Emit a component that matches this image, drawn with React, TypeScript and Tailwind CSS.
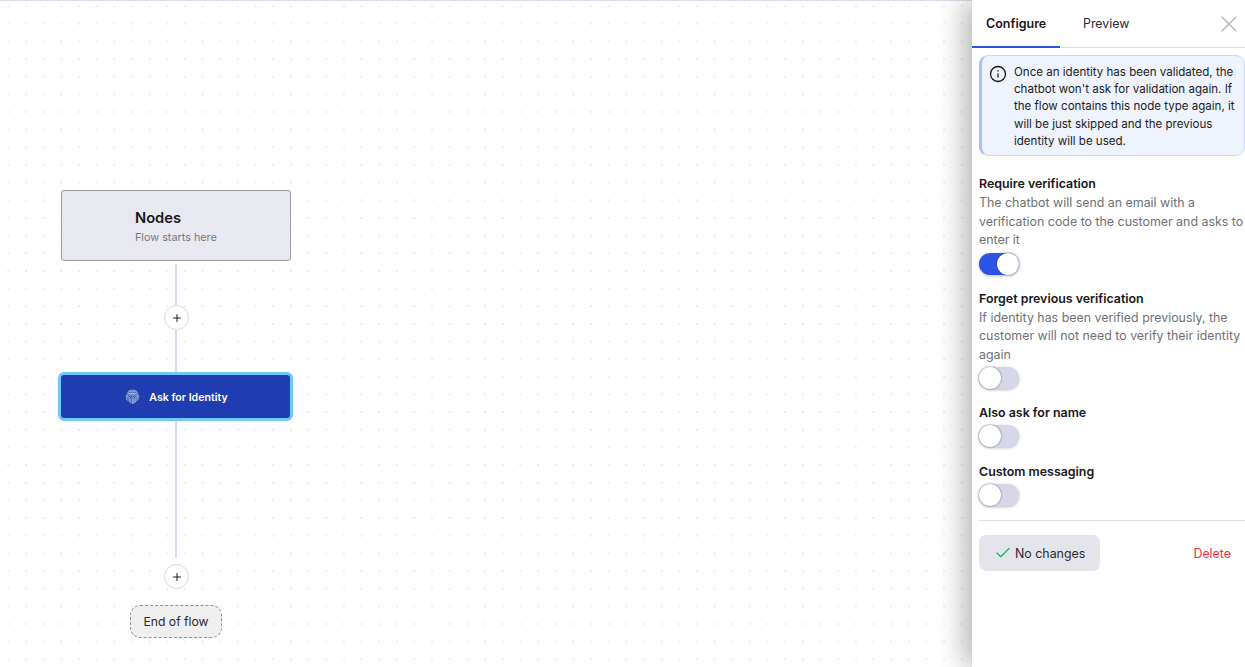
import React from "react";
import { Check, Info, Plus, X } from "lucide-react";

function Toggle({ on = false }: { on?: boolean }) {
  return (
    <div className={`relative h-[22px] w-[40px] rounded-full shadow-[0_1px_3px_rgba(60,60,90,0.35)] ${on ? "bg-[#2b54e6]" : "bg-[#d6d7e7]"}`}>
      <div className={`absolute top-0 h-[22px] w-[22px] rounded-full bg-white shadow-[0_0_2px_rgba(40,40,80,0.7)] ${on ? "left-[18px]" : "left-0"}`} />
    </div>
  );
}

function Section({ title, desc, on, gap }: { title: string; desc?: string[]; on?: boolean; gap: string }) {
  return (
    <div className={gap}>
      <div className="text-[12.4px] leading-[19px] font-semibold text-[#17171c]">{title}</div>
      {desc && (
        <div className="mt-[1px] text-[12.4px] leading-[18.5px] text-[#6f7075]">
          {desc.map((l) => (
            <div key={l} className="whitespace-nowrap">{l}</div>
          ))}
        </div>
      )}
      <div className="mt-[3px]">
        <Toggle on={on} />
      </div>
    </div>
  );
}

function AddButton({ top }: { top: string }) {
  return (
    <div className={`absolute left-[164px] flex h-[25px] w-[25px] items-center justify-center rounded-full border border-[#d9d9ea] bg-white ${top}`}>
      <Plus size={12} strokeWidth={2} color="#1b1b20" />
    </div>
  );
}

function FingerprintIcon() {
  return (
    <svg width="15" height="15" viewBox="0 0 16 16" fill="none" stroke="#d7ddf5" strokeWidth="0.7" strokeLinecap="round">
      <path d="M3.2 2.8C5.8 .6 10.2 .6 12.8 2.8" />
      <path d="M1.8 5C4.4 1.6 11.6 1.6 14.2 5" />
      <path d="M1.2 8.4C1.6 2.6 14.4 2.6 14.8 8.4" />
      <path d="M1.6 11C1.8 9.6 2 8.4 2.6 7.2C4.8 3.6 11.6 3.8 13.4 7.4C14 8.6 14.2 10 14.2 11" />
      <path d="M3.2 12.6C3 10 3.2 8 4.6 6.8C7 4.8 11.6 5.6 12.6 8.6C13 10 13 11.4 12.8 12.6" />
      <path d="M4.8 14C4.4 11.6 4.4 9.2 5.6 8C7.4 6.2 10.8 7 11.4 9.4C11.6 10.8 11.6 12.4 11.2 14" />
      <path d="M6.4 15C6 12.8 5.8 10.4 6.8 9.2C8 8 9.8 8.8 10 10.4C10.2 12 10 13.6 9.6 15.2" />
      <path d="M8 15.4C7.8 13.6 7.4 11.4 7.9 10.2C8.4 9.6 8.9 10.4 8.8 11.6C8.8 12.8 8.6 14 8.4 15.2" />
    </svg>
  );
}

export default function App() {
  return (
    <div className="flex h-[667px] w-full overflow-hidden bg-white font-['Inter',sans-serif]">
      <div className="relative h-full flex-1 border-t border-[#dcdcea] bg-[radial-gradient(circle,#c4c4c8_0.45px,transparent_0.8px)] bg-[size:17.67px_17.67px] bg-[position:-0.5px_-3.8px]">
        <div className="absolute left-[61px] top-[189px] h-[71px] w-[230px] rounded-[3px] border border-[#9a9ba5] bg-[#e8e8f1]">
          <div className="pl-[73px] pt-[17px]">
            <div className="text-[14.7px] leading-[20px] font-semibold text-[#17171c]">Nodes</div>
            <div className="mt-[2px] text-[10.8px] leading-[16px] text-[#77777f]">Flow starts here</div>
          </div>
        </div>
        <div className="absolute left-[175px] top-[263px] h-[45px] w-[2px] bg-[#d9daec]" />
        <AddButton top="top-[304px]" />
        <div className="absolute left-[175px] top-[329px] h-[44px] w-[2px] bg-[#d9daec]" />
        <div className="absolute left-[58px] top-[371px] flex h-[49px] w-[235px] items-center justify-center rounded-[6px] border-[3px] border-[#70c8ff] bg-[#1f3db1] pl-[2px]">
          <FingerprintIcon />
          <span className="ml-[9px] pt-[2px] text-[10.6px] font-semibold text-white">Ask for Identity</span>
        </div>
        <div className="absolute left-[175px] top-[420px] h-[137px] w-[2px] bg-[#d9daec]" />
        <AddButton top="top-[563px]" />
        <div className="absolute left-[130px] top-[604px] flex h-[33px] w-[92px] items-center justify-center rounded-[10px] border border-dashed border-[#8f8f94] bg-[#efeff0] pt-[2px] text-[12.2px] text-[#2a2a2e]">
          End of flow
        </div>
      </div>
      <div className="relative z-10 h-full w-[273px] shrink-0 bg-white shadow-[-6px_0_28px_rgba(0,0,0,0.32)]">
        <div className="flex h-[48px] items-stretch border-b border-[#dcdce9] pr-[2px]">
          <div className="-mb-px flex w-[88px] items-center border-b-2 border-[#2b54e6] pl-[14px] pt-[2px] text-[12.5px] font-semibold text-[#17171c]">
            Configure
          </div>
          <div className="ml-[23px] flex items-center pt-[2px] text-[12.4px] text-[#2a2a2e]">Preview</div>
          <div className="ml-auto flex items-center">
            <X size={28} strokeWidth={1.3} color="#b9b9bd" />
          </div>
        </div>
        <div className="pl-[7px]">
          <div className="mt-[7px] flex h-[101px] rounded-[9px] border border-[#c9d6fb] border-l-[3px] border-l-[#a9c0fa] bg-[#eff3fe] pl-[7px] pt-[8px]">
            <Info size={18} strokeWidth={1.7} color="#17171c" className="mt-[1px] shrink-0" />
            <div className="ml-[7px] text-[11.55px] leading-[17.2px] text-[#1c1c21]">
              <div className="whitespace-nowrap">Once an identity has been validated, the</div>
              <div className="whitespace-nowrap">chatbot won't ask for validation again. If</div>
              <div className="whitespace-nowrap">the flow contains this node type again, it</div>
              <div className="whitespace-nowrap">will be just skipped and the previous</div>
              <div className="whitespace-nowrap">identity will be used.</div>
            </div>
          </div>
          <Section
            gap="mt-[18px]"
            title="Require verification"
            on
            desc={["The chatbot will send an email with a", "verification code to the customer and asks to", "enter it"]}
          />
          <Section
            gap="mt-[14px]"
            title="Forget previous verification"
            desc={["If identity has been verified previously, the", "customer will not need to verify their identity", "again"]}
          />
          <Section gap="mt-[13.5px]" title="Also ask for name" />
          <Section gap="mt-[15px]" title="Custom messaging" />
          <div className="mt-[14px] h-px bg-[#dcdce9]" />
          <div className="mt-[14px] flex items-center justify-between pr-[14px]">
            <div className="flex h-[36px] w-[121px] items-center rounded-[7px] bg-[#e4e5ea] pl-[15px] text-[12.4px] text-[#2a2a2e]">
              <Check size={18} strokeWidth={1.7} color="#22b35e" className="mt-[1px]" />
              <span className="ml-[3px] pt-[3px]">No changes</span>
            </div>
            <div className="pt-[3px] text-[12.4px] text-[#e8304a]">Delete</div>
          </div>
        </div>
      </div>
    </div>
  );
}
